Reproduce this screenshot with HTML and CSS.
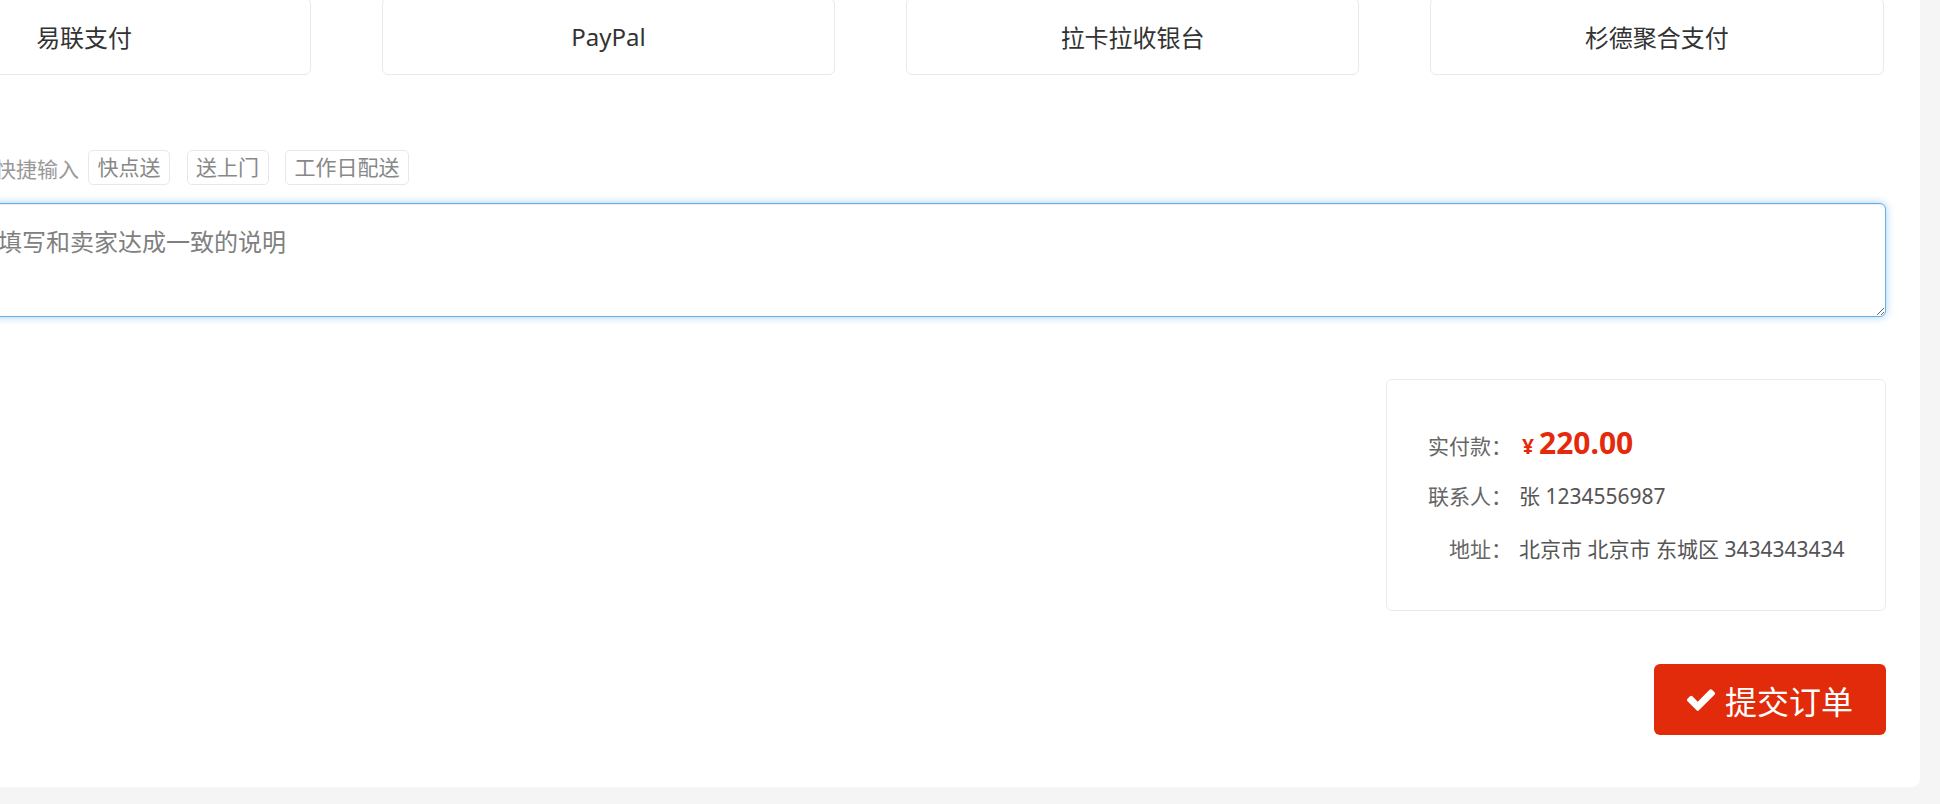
FILE: index.html
```html
<!DOCTYPE html>
<html lang="zh-CN">
<head>
  <meta charset="UTF-8">
  <title>确认订单</title>
  <meta name="viewport" content="width=device-width, initial-scale=1.0">
  <link rel="stylesheet" href="styles.css">
</head>
<body>
  <div class="panel">
    <div class="pay-list">
      <div class="pay-item">易联支付</div>
      <div class="pay-item">PayPal</div>
      <div class="pay-item">拉卡拉收银台</div>
      <div class="pay-item">杉德聚合支付</div>
    </div>

    <div class="remark">
      <div class="remark-label"></div>
      <div class="remark-field">
        <div class="quick">
          <span class="quick-title">快捷输入</span>
          <span class="quick-tag">快点送</span>
          <span class="quick-tag">送上门</span>
          <span class="quick-tag">工作日配送</span>
        </div>
        <textarea class="remark-input" placeholder="填写和卖家达成一致的说明"></textarea>
      </div>
    </div>

    <div class="order-foot">
      <div class="summary">
        <div class="summary-row">
          <span class="summary-label">实付款：</span>
          <span class="summary-value price"><small>¥</small>220.00</span>
        </div>
        <div class="summary-row">
          <span class="summary-label">联系人：</span>
          <span class="summary-value">张 1234556987</span>
        </div>
        <div class="summary-row">
          <span class="summary-label">地址：</span>
          <span class="summary-value">北京市 北京市 东城区 3434343434</span>
        </div>
      </div>
      <button class="submit-btn" type="button">
        <svg class="submit-icon" viewBox="121 334 1550 1188" aria-hidden="true"><path d="M1671 566q0 40-28 68l-724 724-136 136q-28 28-68 28t-68-28l-136-136-362-362q-28-28-28-68t28-68l136-136q28-28 68-28t68 28l294 295 656-657q28-28 68-28t68 28l136 136q28 28 28 68z" fill="currentColor"/></svg>
        提交订单
      </button>
    </div>
  </div>
</body>
</html>
```

FILE: styles.css
```css
body {
  margin: 0;
  background: #f5f5f5;
  font-family: "Noto Sans", "Noto Sans CJK SC", sans-serif;
  color: #333;
  overflow: hidden;
}

.panel {
  background: #fff;
  margin: -2px 20px 0 -160px;
  padding: 0 34px 52px 17.5px;
  border-radius: 0 0 8px 0;
}

.pay-list {
  display: grid;
  grid-template-columns: repeat(4, 1fr);
  gap: 71px;
  margin-right: 2.5px;
}

.pay-item {
  height: 77px;
  box-sizing: border-box;
  border: 1px solid #e9e9e9;
  border-radius: 6px;
  display: flex;
  align-items: center;
  justify-content: center;
  font-size: 24px;
  color: #333;
}

.remark {
  display: grid;
  grid-template-columns: 124.5px 1fr;
  margin-top: 75px;
}

.quick {
  display: flex;
  align-items: center;
  padding-left: 13px;
  font-size: 21px;
  color: #999;
}

.quick-title {
  margin-right: 9px;
}

.quick-tag {
  height: 35px;
  box-sizing: border-box;
  line-height: 33px;
  padding: 0 8.5px;
  margin-right: 16.5px;
  border: 1px solid #e8e8e8;
  border-radius: 5px;
  color: #888;
}

.remark-input {
  display: block;
  width: 100%;
  height: 114px;
  box-sizing: border-box;
  margin-top: 18px;
  padding: 20px 15px 18px;
  font-family: inherit;
  font-size: 24px;
  line-height: 36px;
  color: #555;
  border: 1px solid #66afe9;
  border-radius: 6px;
  box-shadow: inset 0 1px 1px rgba(0, 0, 0, .075), 0 0 8px rgba(102, 175, 233, .6);
  outline: none;
  resize: vertical;
}

.remark-input::placeholder {
  color: #808080;
}

.order-foot {
  display: flex;
  flex-direction: column;
  align-items: flex-end;
  margin-top: 62px;
}

.summary {
  width: 500px;
  box-sizing: border-box;
  border: 1px solid #ebebeb;
  border-radius: 6px;
  padding: 47px 20px 45px 25px;
}

.summary-row {
  display: grid;
  grid-template-columns: 100px 1fr;
  column-gap: 7px;
  align-items: baseline;
  height: 32px;
  line-height: 32px;
  margin-bottom: 21px;
  font-size: 21px;
}

.summary-row:last-child {
  margin-bottom: 0;
}

.summary-label {
  text-align: right;
  color: #666;
}

.summary-value {
  color: #555;
  white-space: nowrap;
}

.price {
  color: #e42a0a;
  font-size: 30px;
  font-weight: bold;
}

.price small {
  font-size: 21px;
  margin: 0 5px 0 3px;
}

.submit-btn {
  margin-top: 53px;
  height: 71px;
  padding: 0 33px;
  display: inline-flex;
  align-items: center;
  gap: 10px;
  background: #e22b0a;
  color: #fff;
  border: none;
  border-radius: 6px;
  font-family: inherit;
  font-size: 32px;
  cursor: pointer;
}

.submit-icon {
  width: 28px;
  height: 22px;
}
```
